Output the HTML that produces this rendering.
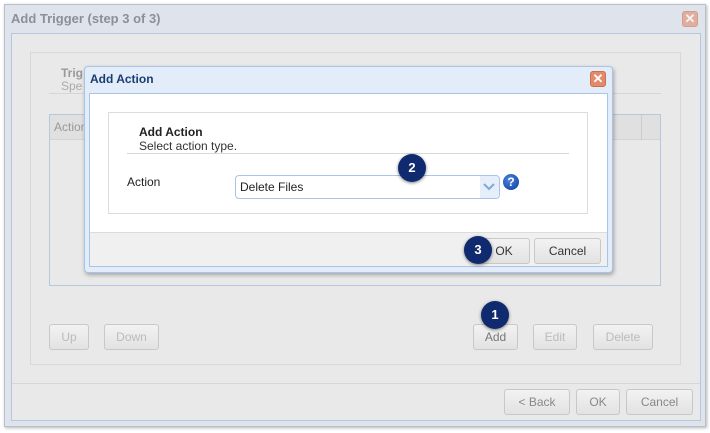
<!DOCTYPE html>
<html><head><style>
*{box-sizing:border-box;margin:0;padding:0}
body{width:710px;height:433px;background:#fff;font-family:"Liberation Sans",Arial,sans-serif;font-size:12px;position:relative;overflow:hidden}
.a{position:absolute}
.btn{position:absolute;border:1px solid #c8c8c8;border-radius:3px;background:linear-gradient(#f2f2f2,#e2e2e2);color:#bbb;text-align:center;font-size:12px}
.badge{position:absolute;width:28px;height:28px;border-radius:50%;background:#0f2a6e;color:#fff;font-weight:bold;font-size:13px;text-align:center;line-height:28px;box-shadow:0 1px 3px rgba(0,0,0,.5)}
.x{position:absolute;width:16px;height:16px;border-radius:3px;background:#e48a6a;border:1px solid #c9704f;color:#fff;font-size:13px;line-height:13px;text-align:center;font-weight:bold}
</style></head><body>
<!-- outer window -->
<div class="a" style="left:4px;top:4px;width:702px;height:423px;background:#dfe4ec;border:1px solid #b8bfc8;box-shadow:1px 1px 3px rgba(0,0,0,.3)"></div>
<div class="a" style="left:11px;top:11px;font-size:13px;font-weight:bold;color:#8a9099">Add Trigger (step 3 of 3)</div>
<div class="x" style="left:682px;top:11px;opacity:.6">✕</div>
<div class="a" style="left:11px;top:33px;width:690px;height:388px;background:#e9e9e9;border:1px solid #b6c8e0"></div>
<div class="a" style="left:12px;top:383px;width:688px;height:1px;background:#d6d6d6"></div>
<div class="a" style="left:30px;top:52px;width:651px;height:313px;border:1px solid #d8d8d8"></div>
<div class="a" style="left:61px;top:66px;font-weight:bold;color:#999">Trig</div>
<div class="a" style="left:61px;top:79px;color:#aaa">Spe</div>
<div class="a" style="left:49px;top:93px;width:612px;height:1px;background:#d6d6d6"></div>
<div class="a" style="left:49px;top:114px;width:612px;height:172px;border:1px solid #b6c8e0"></div>
<div class="a" style="left:50px;top:115px;width:610px;height:25px;background:#e0e0e0;border-bottom:1px solid #d4d4d4"></div>
<div class="a" style="left:641px;top:115px;width:1px;height:25px;background:#ccc"></div>
<div class="a" style="left:54px;top:120px;color:#999">Action</div>
<div class="btn" style="left:49px;top:324px;width:40px;height:26px;line-height:24px">Up</div>
<div class="btn" style="left:104px;top:324px;width:55px;height:26px;line-height:24px">Down</div>
<div class="btn" style="left:473px;top:324px;width:45px;height:26px;line-height:24px;color:#777">Add</div>
<div class="btn" style="left:533px;top:324px;width:44px;height:26px;line-height:24px">Edit</div>
<div class="btn" style="left:593px;top:324px;width:60px;height:26px;line-height:24px">Delete</div>
<div class="badge" style="left:481px;top:301px">1</div>
<div class="btn" style="left:504px;top:389px;width:66px;height:26px;line-height:24px;color:#888">&lt; Back</div>
<div class="btn" style="left:576px;top:389px;width:44px;height:26px;line-height:24px;color:#888">OK</div>
<div class="btn" style="left:626px;top:389px;width:67px;height:26px;line-height:24px;color:#888">Cancel</div>

<!-- dialog -->
<div class="a" style="left:84px;top:66px;width:529px;height:207px;background:#e3edf9;border:1px solid #a9c4e6;border-radius:4px;box-shadow:1px 2px 4px rgba(0,0,0,.3)"></div>
<div class="a" style="left:90px;top:72px;font-size:12px;font-weight:bold;color:#1c3c6e">Add Action</div>
<div class="x" style="left:590px;top:71px">✕</div>
<div class="a" style="left:89px;top:93px;width:519px;height:174px;background:#fff;border:1px solid #a9c4e6"></div>
<div class="a" style="left:90px;top:232px;width:517px;height:34px;background:#f0f0f0;border-top:1px solid #dcdcdc"></div>
<div class="a" style="left:108px;top:112px;width:480px;height:102px;border:1px solid #dcdcdc"></div>
<div class="a" style="left:139px;top:125px;font-weight:bold;color:#222">Add Action</div>
<div class="a" style="left:139px;top:139px;color:#333">Select action type.</div>
<div class="a" style="left:127px;top:153px;width:442px;height:1px;background:#d8d8d8"></div>
<div class="a" style="left:127px;top:175px;color:#222">Action</div>
<div class="a" style="left:235px;top:175px;width:265px;height:24px;border:1px solid #a9c4e6;border-radius:4px;background:#fff"></div>
<div class="a" style="left:480px;top:176px;width:19px;height:22px;background:#e6eefa;border-radius:0 3px 3px 0"></div>
<svg class="a" style="left:483px;top:182px" width="12" height="10"><path d="M1 2 L6 7 L11 2" stroke="#7faad8" stroke-width="2" fill="none"/></svg>
<div class="a" style="left:240px;top:180px;color:#222">Delete Files</div>
<div class="a" style="left:503px;top:174px;width:16px;height:16px;border-radius:50%;background:radial-gradient(circle at 40% 35%,#4a86e0,#0d3a9a);color:#fff;font-weight:bold;font-size:12px;text-align:center;line-height:16px">?</div>
<div class="badge" style="left:398px;top:154px">2</div>
<div class="btn" style="left:478px;top:238px;width:52px;height:26px;line-height:24px;color:#333">OK</div>
<div class="btn" style="left:534px;top:238px;width:67px;height:26px;line-height:24px;color:#333">Cancel</div>
<div class="badge" style="left:464px;top:236px">3</div>
</body></html>
